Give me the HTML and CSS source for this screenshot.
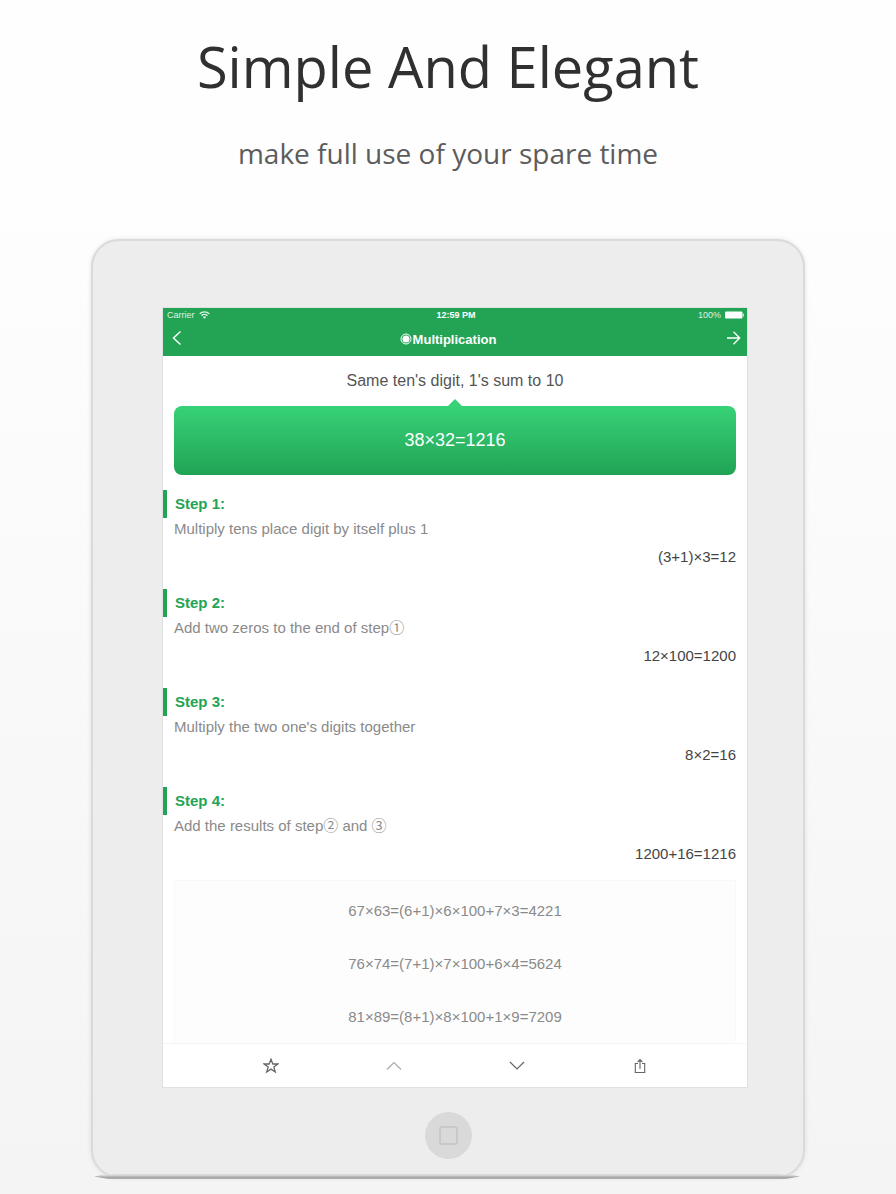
FILE: index.html
```html
<!DOCTYPE html>
<html lang="en">
<head>
    <meta charset="UTF-8">
    <meta name="viewport" content="width=device-width, initial-scale=1.0">
    <title>Simple And Elegant</title>
    <link rel="stylesheet" href="styles.css">
</head>
<body>
    <header class="intro">
        <h1 class="intro-title">Simple And Elegant</h1>
        <p class="intro-text">make full use of your spare time</p>
    </header>

    <div class="tablet">
        <main class="screen">
            <div class="top">
                <div class="status-bar">
                    <div class="carrier">
                        <span>Carrier</span>
                        <svg width="11" height="8" viewBox="0 0 11 8" fill="none" stroke="currentColor" stroke-width="1.3">
                            <path d="M0.7 2.8a6.8 6.8 0 0 1 9.6 0M2.5 4.7a4.2 4.2 0 0 1 6 0"/>
                            <path d="M5.5 7.8 3.8 6.1a2.4 2.4 0 0 1 3.4 0z" fill="currentColor" stroke="none"/>
                        </svg>
                    </div>
                    <div class="clock">12:59 PM</div>
                    <div class="battery">
                        <span>100%</span>
                        <svg width="20" height="8" viewBox="0 0 20 8" fill="currentColor">
                            <rect x="0" y="0.5" width="17.5" height="7" rx="1.2"/>
                            <path d="M18.2 2.2q2 1.8 0 3.6z"/>
                        </svg>
                    </div>
                </div>
                <nav class="nav-bar">
                    <button class="icon-button" type="button" aria-label="Back">
                        <svg width="10" height="16" viewBox="0 0 10 16" fill="none" stroke="currentColor" stroke-width="1.4">
                            <path d="M8.5 0.5 1.5 7l7 6.5"/>
                        </svg>
                    </button>
                    <h2 class="nav-title">
                        <svg width="12" height="12" viewBox="0 0 12 12">
                            <circle cx="6" cy="6" r="5" fill="none" stroke="currentColor" stroke-width="1"/>
                            <circle cx="6" cy="6" r="3.5" fill="currentColor"/>
                        </svg>
                        Multiplication
                    </h2>
                    <button class="icon-button" type="button" aria-label="Next">
                        <svg width="15" height="16" viewBox="0 0 15 16" fill="none" stroke="currentColor" stroke-width="1.3">
                            <path d="M1 7h12.5M7.5 0.8 13.7 7l-6.2 6.2"/>
                        </svg>
                    </button>
                </nav>
            </div>

            <p class="hint">Same ten's digit, 1's sum to 10</p>
            <div class="formula">38×32=1216</div>

            <div class="steps">
                <section class="step">
                    <h3 class="step-title">Step 1:</h3>
                    <p class="step-text">Multiply tens place digit by itself plus 1</p>
                    <p class="step-result">(3+1)×3=12</p>
                </section>
                <section class="step">
                    <h3 class="step-title">Step 2:</h3>
                    <p class="step-text">Add two zeros to the end of step①</p>
                    <p class="step-result">12×100=1200</p>
                </section>
                <section class="step">
                    <h3 class="step-title">Step 3:</h3>
                    <p class="step-text">Multiply the two one's digits together</p>
                    <p class="step-result">8×2=16</p>
                </section>
                <section class="step">
                    <h3 class="step-title">Step 4:</h3>
                    <p class="step-text">Add the results of step② and ③</p>
                    <p class="step-result">1200+16=1216</p>
                </section>
            </div>

            <ul class="examples">
                <li>67×63=(6+1)×6×100+7×3=4221</li>
                <li>76×74=(7+1)×7×100+6×4=5624</li>
                <li>81×89=(8+1)×8×100+1×9=7209</li>
            </ul>

            <div class="toolbar">
                <button class="icon-button" type="button" aria-label="Favorite">
                    <svg width="16" height="16" viewBox="0 0 16 16" fill="none" stroke="currentColor" stroke-width="1.3">
                        <path d="M8 1.2 9.8 6h5l-4 3.1 1.5 4.9L8 11.1 3.7 14l1.5-4.9-4-3.1h5z"/>
                    </svg>
                </button>
                <button class="icon-button faded" type="button" aria-label="Previous problem">
                    <svg width="16" height="16" viewBox="0 0 16 16" fill="none" stroke="currentColor" stroke-width="1.2">
                        <path d="M1 11.5 8 4.5l7 7"/>
                    </svg>
                </button>
                <button class="icon-button" type="button" aria-label="Next problem">
                    <svg width="16" height="16" viewBox="0 0 16 16" fill="none" stroke="currentColor" stroke-width="1.2">
                        <path d="M1 4l7 7 7-7"/>
                    </svg>
                </button>
                <button class="icon-button" type="button" aria-label="Share">
                    <svg width="16" height="16" viewBox="0 0 16 16" fill="none" stroke="currentColor" stroke-width="1.1">
                        <path d="M6 5.5H3.3v9h9.4v-9H10M8 11V1.8M5.7 4 8 1.6 10.3 4"/>
                    </svg>
                </button>
            </div>
        </main>

        <button class="home-button" type="button" aria-label="Home"></button>
    </div>
</body>
</html>
```

FILE: styles.css
```css
*,
*::before,
*::after {
    margin: 0;
    padding: 0;
    box-sizing: border-box;
}

body {
    font-family: 'Liberation Sans', Arial, sans-serif;
    background: linear-gradient(#fefefe 15%, #f4f4f4);
    min-height: 100vh;
    padding: 27px 16px 16px;
}

.intro {
    font-family: 'Open Sans', sans-serif;
    text-align: center;
    margin-bottom: 66px;
}

.intro-title {
    font-size: 56px;
    line-height: 78px;
    font-weight: 400;
    color: #303030;
    margin-bottom: 28px;
}

.intro-text {
    font-size: 28px;
    line-height: 40px;
    color: #5c5c5c;
}

/* Tablet body */
.tablet {
    position: relative;
    max-width: 714px;
    margin: 0 auto;
    padding: 67px 0 17px;
    background: #ededed;
    border: 2px solid #dadada;
    border-radius: 28px;
    box-shadow: 0 0 5px rgba(0, 0, 0, 0.1);
}

/* Dark edge the tablet stands on */
.tablet::after {
    content: '';
    position: absolute;
    left: 1px;
    right: 3px;
    bottom: -3px;
    height: 5px;
    background: linear-gradient(#dcdcdc, #d0d0d0 40%, #a4a4a4 60%, #b0b0b0);
    clip-path: polygon(0 50%, 1% 20%, 2% 20%, 3% 0, 97% 0, 98% 20%, 99% 20%, 100% 50%, 98% 100%, 2% 100%);
}

.screen {
    margin: 0 56px 0 70px;
    background: #fff;
    box-shadow: 0 0 0 1px #e0e0e2;
}

.top {
    background: #23a455;
    color: #fff;
}

.status-bar {
    display: flex;
    align-items: center;
    height: 14px;
    padding: 0 2px 0 4px;
    font-size: 9px;
}

.carrier,
.battery {
    flex: 1;
    display: flex;
    align-items: center;
    gap: 4px;
}

.carrier,
.battery span {
    opacity: 0.85;
}

.battery {
    justify-content: flex-end;
}

.clock {
    font-weight: bold;
}

.nav-bar {
    display: flex;
    align-items: center;
    justify-content: space-between;
    height: 34px;
    padding: 0 6px 0 9px;
}

.nav-title {
    display: flex;
    align-items: center;
    gap: 1px;
    padding-right: 12px;
    font-size: 13px;
}

.icon-button {
    display: flex;
    background: none;
    border: none;
    color: inherit;
    cursor: pointer;
}

.hint {
    padding-top: 14px;
    font-size: 16px;
    line-height: 22px;
    text-align: center;
    color: #555;
}

/* Formula bubble with a small pointer on top */
.formula {
    position: relative;
    margin: 14px 11px 0;
    border-radius: 8px;
    background: linear-gradient(#37d278, #21a355);
    font-size: 18px;
    line-height: 69px;
    text-align: center;
    color: #fff;
}

.formula::before {
    content: '';
    position: absolute;
    top: -7px;
    left: 50%;
    margin-left: -8px;
    border: 8px solid transparent;
    border-top: none;
    border-bottom-color: #37d278;
}

.steps {
    display: flex;
    flex-direction: column;
    gap: 21px;
    padding-top: 15px;
}

.step-title {
    padding-left: 8px;
    border-left: 4px solid #23a455;
    font-size: 15px;
    line-height: 28px;
    color: #23a455;
}

.step-text {
    padding: 0 11px;
    font-family: 'Liberation Sans', Arial, 'Noto Sans CJK SC', sans-serif;
    font-size: 15px;
    line-height: 22px;
    color: #8a8a8a;
}

.step-result {
    padding: 6px 11px 0;
    font-size: 15px;
    line-height: 22px;
    text-align: right;
    color: #444;
}

.examples {
    margin: 15px 11px 0;
    padding-top: 3px;
    list-style: none;
    background: #fdfdfd;
    border: 1px solid #f8f8f8;
    border-bottom: none;
    font-size: 15px;
    line-height: 53px;
    text-align: center;
    color: #8a8a8a;
}

.toolbar {
    display: flex;
    align-items: center;
    justify-content: space-around;
    height: 44px;
    padding: 0 46px;
    border-top: 1px solid #f5f5f5;
    color: #666;
}

.faded {
    color: #aaa;
}

/* Home button */
.home-button {
    display: flex;
    align-items: center;
    justify-content: center;
    width: 47px;
    height: 47px;
    margin: 25px auto 0;
    border: none;
    border-radius: 50%;
    background: #d9d9d9;
}

.home-button::before {
    content: '';
    width: 19px;
    height: 19px;
    border: 2px solid #c8c8cc;
    border-radius: 3px;
}
```
